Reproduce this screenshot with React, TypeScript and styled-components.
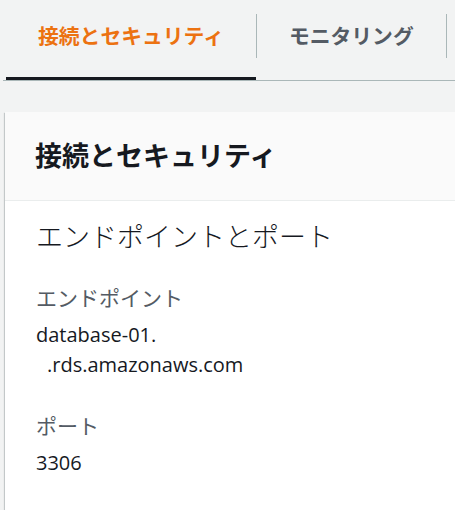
import React from "react";
import styled, { createGlobalStyle } from "styled-components";

const GlobalStyle = createGlobalStyle`
  html, body {
    margin: 0;
    padding: 0;
    background: #f2f3f3;
    overflow: hidden;
  }
  body {
    font-family: "Open Sans", "Noto Sans CJK JP", sans-serif;
    color: #16191f;
  }
`;

const Page = styled.div`
  width: 455px;
  height: 510px;
  overflow: hidden;
`;

const TabBar = styled.div`
  display: flex;
  align-items: flex-start;
  margin-left: 3px;
  padding-left: 3px;
  border-bottom: 1px solid #aab7b8;
  width: 700px;
`;

const Tab = styled.div<{ $active?: boolean }>`
  display: flex;
  align-items: center;
  height: 70px;
  padding: 0 32px 7px;
  border-bottom: 3px solid ${(p) => (p.$active ? "#16191f" : "transparent")};
  font-size: 20.8px;
  font-weight: 700;
  color: ${(p) => (p.$active ? "#ec7211" : "#545b64")};
  white-space: nowrap;
`;

const Separator = styled.div`
  flex-shrink: 0;
  width: 1px;
  height: 44px;
  margin-top: 14px;
  background: #aab7b8;
`;

const Card = styled.div`
  margin: 31px 0 0 5px;
  width: 700px;
  background: #fff;
  box-shadow: 0 1px 1px 0 rgba(0, 28, 36, 0.3),
    1px 1px 1px 0 rgba(0, 28, 36, 0.15), -1px 1px 1px 0 rgba(0, 28, 36, 0.15);
`;

const CardHeader = styled.div`
  display: flex;
  align-items: center;
  height: 85px;
  padding: 0 30px 3px;
  background: #fafafa;
  border-bottom: 1px solid #eaeded;
`;

const CardTitle = styled.h2`
  margin: 0;
  font-size: 27px;
  font-weight: 700;
  color: #16191f;
`;

const CardBody = styled.div`
  padding: 18px 31px 30px;
`;

const SectionTitle = styled.h3`
  margin: 0 0 28px;
  font-size: 27px;
  line-height: 36px;
  font-weight: 300;
  color: #16191f;
`;

const Field = styled.div`
  margin-bottom: 31px;
`;

const Label = styled.div`
  font-size: 21px;
  line-height: 30px;
  color: #545b64;
  margin-bottom: 7px;
`;

const Value = styled.div`
  font-size: 20px;
  line-height: 30px;
  color: #16191f;
`;

const Indent = styled.span`
  padding-left: 11px;
`;

export default function App() {
  return (
    <Page>
      <GlobalStyle />
      <TabBar>
        <Tab $active>接続とセキュリティ</Tab>
        <Separator />
        <Tab>モニタリング</Tab>
        <Separator />
      </TabBar>
      <Card>
        <CardHeader>
          <CardTitle>接続とセキュリティ</CardTitle>
        </CardHeader>
        <CardBody>
          <SectionTitle>エンドポイントとポート</SectionTitle>
          <Field>
            <Label>エンドポイント</Label>
            <Value>
              database-01.
              <br />
              <Indent>.rds.amazonaws.com</Indent>
            </Value>
          </Field>
          <Field>
            <Label>ポート</Label>
            <Value>3306</Value>
          </Field>
        </CardBody>
      </Card>
    </Page>
  );
}
